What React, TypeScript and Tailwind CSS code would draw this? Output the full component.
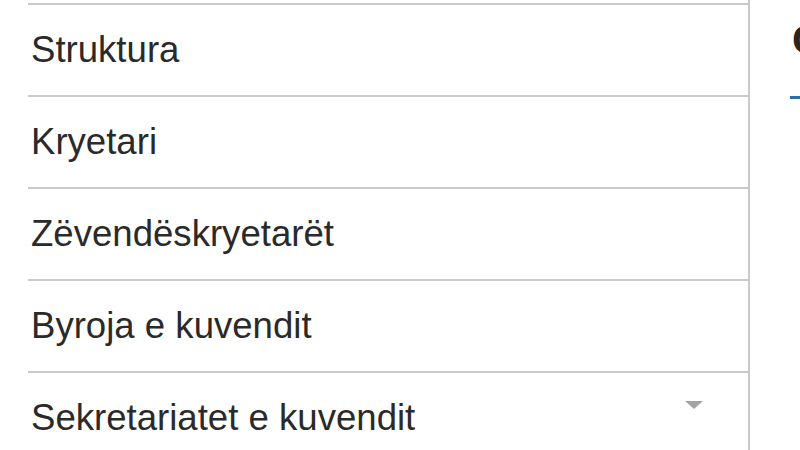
import React from 'react';

const items = [
  'Struktura',
  'Kryetari',
  'Zëvendëskryetarët',
  'Byroja e kuvendit',
  'Sekretariatet e kuvendit',
];

export default function App() {
  return (
    <div
      className="flex h-[450px] w-[800px] overflow-hidden bg-white text-[#2a2a2a]"
      style={{ fontFamily: '"Liberation Sans", Arial, sans-serif' }}
    >
      <div className="w-[28px] shrink-0" />

      {/* Side menu */}
      <ul className="w-[722px] shrink-0 border-r-2 border-[#cacaca] pt-[3px]">
        {items.map((label, i) => (
          <li
            key={label}
            className="flex h-[92px] items-center justify-between border-t-2 border-[#cacaca] pl-[3px] pr-[44px] text-[36.6px] leading-none"
          >
            <span>{label}</span>
            {i === items.length - 1 && (
              <svg width="20" height="8" viewBox="0 0 20 8" className="-translate-y-[13px]">
                <path d="M1 0 L19 0 L10 8 Z" fill="#a3a3a3" />
              </svg>
            )}
          </li>
        ))}
      </ul>

      {/* Content column, mostly off-screen */}
      <div className="ml-[40px] shrink-0 pt-[14px]">
        <h2 className="whitespace-nowrap pl-[2px] text-[42px] font-bold leading-[52px] text-[#2b2222]">
          Organizimi
        </h2>
        <div className="mt-[30px] h-[3px] w-[60px] bg-[#2f6fa8]" />
      </div>
    </div>
  );
}
